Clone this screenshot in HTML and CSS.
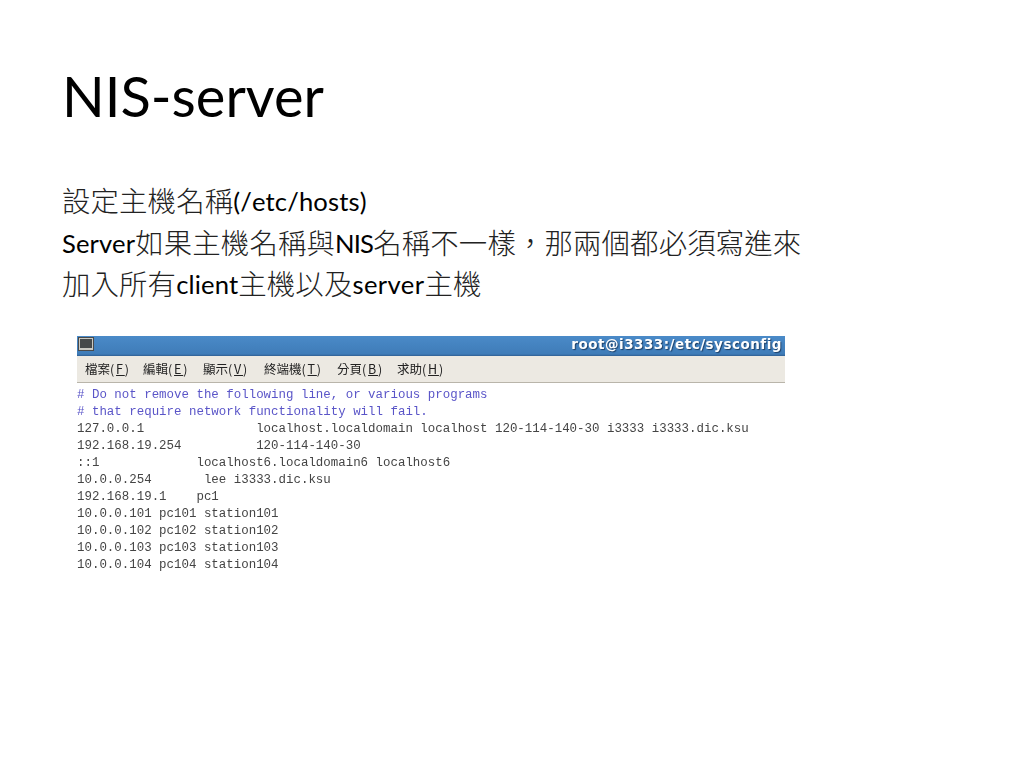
FILE: index.html
```html
<!DOCTYPE html>
<html lang="zh-Hant">
<head>
<meta charset="utf-8">
<title>NIS-server</title>
<link rel="stylesheet" href="styles.css">
</head>
<body>
<main class="slide">
  <h1 class="title">NIS-server</h1>
  <div class="bullets">
    <p><span class="cjk">設定主機名稱</span>(/etc/hosts)</p>
    <p>Server<span class="cjk">如果主機名稱與</span><span class="caps">NIS</span><span class="cjk">名稱不一樣，那兩個都必須寫進來</span></p>
    <p><span class="cjk">加入所有</span>client<span class="cjk">主機以及</span><span class="wide">server</span><span class="cjk">主機</span></p>
  </div>
  <section class="terminal">
    <div class="titlebar">
      <svg class="winicon" width="16" height="14" viewBox="0 0 16 14"><rect x="0.5" y="0.5" width="15" height="13" fill="#c9c9c2" stroke="#4a4a4a"/><rect x="2" y="2" width="12" height="9" fill="#45494a"/></svg>
      <span class="wintitle">root@i3333:/etc/sysconfig</span>
    </div>
    <nav class="menubar">
      <span class="m1">檔案<i>(<u>F</u>)</i></span>
      <span class="m2">編輯<i>(<u>E</u>)</i></span>
      <span class="m3">顯示<i>(<u>V</u>)</i></span>
      <span class="m4">終端機<i>(<u>T</u>)</i></span>
      <span class="m5">分頁<i>(<u>B</u>)</i></span>
      <span>求助<i>(<u>H</u>)</i></span>
    </nav>
<pre class="screen"><span class="comment"># Do not remove the following line, or various programs
# that require network functionality will fail.</span>
127.0.0.1               localhost.localdomain localhost 120-114-140-30 i3333 i3333.dic.ksu
192.168.19.254          120-114-140-30
::1             localhost6.localdomain6 localhost6
10.0.0.254       lee i3333.dic.ksu
192.168.19.1    pc1
10.0.0.101 pc101 station101
10.0.0.102 pc102 station102
10.0.0.103 pc103 station103
10.0.0.104 pc104 station104</pre>
  </section>
</main>
</body>
</html>
```
FILE: styles.css
```css
html, body { margin: 0; padding: 0; background: #fff; }
.slide {
  width: 1024px;
  height: 768px;
  box-sizing: border-box;
  padding: 61px 0 0 62px;
  overflow: hidden;
  font-family: "Lato", "Noto Sans CJK TC", sans-serif;
  color: #000;
}
.title {
  margin: 0;
  font-size: 56px;
  line-height: 70px;
  font-weight: 400;
}
.bullets { margin-top: 50px; font-size: 25.6px; line-height: 41.5px; letter-spacing: 0.15px; }
.bullets p { margin: 0; white-space: nowrap; }
.caps { letter-spacing: -0.8px; }
.wide { letter-spacing: 0.4px; }
.cjk {
  font-family: "Noto Sans CJK TC", sans-serif;
  font-size: 28.4px;
  font-weight: 300;
  line-height: 1;
  color: #222;
  vertical-align: -1px;
}
.terminal { width: 708px; margin: 30px 0 0 15px; filter: blur(0.35px); }
.titlebar {
  height: 20px;
  box-sizing: border-box;
  padding: 0 3px 3px 1px;
  background: linear-gradient(#4a8ac8, #3f7cb8 90%, #2f5f92);
  display: flex;
  align-items: center;
  justify-content: space-between;
}
.winicon { display: block; }
.wintitle {
  font: bold 13.5px "DejaVu Sans", sans-serif;
  color: #fff;
  letter-spacing: 0.5px;
  text-shadow: 1px 1px 1px #1d3f66;
}
.menubar {
  height: 27px;
  box-sizing: border-box;
  padding-left: 8px;
  background: #ece9e2;
  border-bottom: 1px solid #b9b5aa;
  display: flex;
  align-items: center;
  font: 12.5px "Noto Sans CJK TC", sans-serif;
  color: #222;
}
.menubar i { font-style: normal; font-size: 12.5px; letter-spacing: 1.8px; }
.m1 { width: 58px; }
.m2 { width: 60px; }
.m3 { width: 61px; }
.m4 { width: 73px; }
.m5 { width: 60px; }
.screen {
  margin: 0;
  padding-top: 4px;
  font: 12.45px/17.1px "Liberation Mono", monospace;
  color: #444;
}
.comment { color: #5a55c8; }
```
